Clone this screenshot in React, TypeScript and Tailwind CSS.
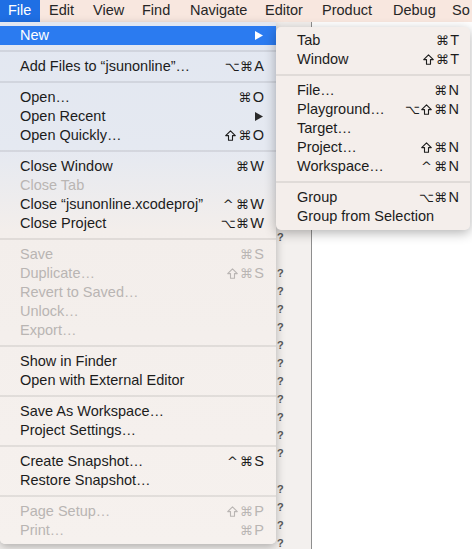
import React from "react";

type Entry =
  | "sep"
  | { label: string; keys?: string[]; disabled?: boolean; arrow?: boolean; active?: boolean };

const mainMenu: Entry[] = [
  { label: "New", arrow: true, active: true },
  "sep",
  { label: "Add Files to “jsunonline”…", keys: ["⌥", "⌘", "A"] },
  "sep",
  { label: "Open…", keys: ["⌘", "O"] },
  { label: "Open Recent", arrow: true },
  { label: "Open Quickly…", keys: ["⇧", "⌘", "O"] },
  "sep",
  { label: "Close Window", keys: ["⌘", "W"] },
  { label: "Close Tab", disabled: true },
  { label: "Close “jsunonline.xcodeproj”", keys: ["^", "⌘", "W"] },
  { label: "Close Project", keys: ["⌥", "⌘", "W"] },
  "sep",
  { label: "Save", keys: ["⌘", "S"], disabled: true },
  { label: "Duplicate…", keys: ["⇧", "⌘", "S"], disabled: true },
  { label: "Revert to Saved…", disabled: true },
  { label: "Unlock…", disabled: true },
  { label: "Export…", disabled: true },
  "sep",
  { label: "Show in Finder" },
  { label: "Open with External Editor" },
  "sep",
  { label: "Save As Workspace…" },
  { label: "Project Settings…" },
  "sep",
  { label: "Create Snapshot…", keys: ["^", "⌘", "S"] },
  { label: "Restore Snapshot…" },
  "sep",
  { label: "Page Setup…", keys: ["⇧", "⌘", "P"], disabled: true },
  { label: "Print…", keys: ["⌘", "P"], disabled: true },
];

const newMenu: Entry[] = [
  { label: "Tab", keys: ["⌘", "T"] },
  { label: "Window", keys: ["⇧", "⌘", "T"] },
  "sep",
  { label: "File…", keys: ["⌘", "N"] },
  { label: "Playground…", keys: ["⌥", "⇧", "⌘", "N"] },
  { label: "Target…" },
  { label: "Project…", keys: ["⇧", "⌘", "N"] },
  { label: "Workspace…", keys: ["^", "⌘", "N"] },
  "sep",
  { label: "Group", keys: ["⌥", "⌘", "N"] },
  { label: "Group from Selection" },
];

const bar = [
  { name: "File", w: "w-[40px] pl-[8px]" },
  { name: "Edit", w: "w-[44px] pl-[9px]" },
  { name: "View", w: "w-[49px] pl-[9px]" },
  { name: "Find", w: "w-[48px] pl-[9px]" },
  { name: "Navigate", w: "w-[75px] pl-[9px]" },
  { name: "Editor", w: "w-[57px] pl-[9px]" },
  { name: "Product", w: "w-[71px] pl-[9px]" },
  { name: "Debug", w: "w-[59px] pl-[9px]" },
  { name: "So", w: "w-[30px] pl-[9px]" },
];

function Arrow({ white }: { white?: boolean }) {
  return (
    <svg width="8" height="9" viewBox="0 0 8 9">
      <polygon points="0,0 8,4.5 0,9" fill={white ? "#ffffff" : "#2a2a2a"} />
    </svg>
  );
}

// outline shift arrow, DejaVu's is too thin
function Shift() {
  return (
    <svg width="11" height="11" viewBox="0 0 11 11" className="mx-auto">
      <polygon
        points="5.5,0.8 10.3,5.6 7.5,5.6 7.5,10.3 3.5,10.3 3.5,5.6 0.7,5.6"
        fill="none"
        stroke="currentColor"
        strokeWidth="1.1"
        strokeLinejoin="round"
      />
    </svg>
  );
}

function Keys({ keys }: { keys: string[] }) {
  const mods = keys.slice(0, -1);
  const key = keys[keys.length - 1];
  return (
    <span className="flex items-center">
      {mods.map((m, i) => (
        <span key={i} className="flex w-[14px] justify-center text-[13px] font-['DejaVu_Sans',sans-serif]">
          {m === "⇧" ? <Shift /> : m}
        </span>
      ))}
      <span className="pl-[1px]">{key}</span>
    </span>
  );
}

function MenuList({ items, padLeft, padRight }: { items: Entry[]; padLeft: string; padRight: string }) {
  return (
    <div className="flex flex-col py-[4px]">
      {items.map((it, i) =>
        it === "sep" ? (
          <div key={i} className="py-[5px]">
            <div className="h-[2px] bg-black/[0.08]" />
          </div>
        ) : (
          <div
            key={i}
            className={`flex h-[19px] items-center justify-between leading-[19px] ${padLeft} ${padRight} ${
              it.active ? "bg-[#2b7bf0] text-white" : it.disabled ? "text-[#b9b5b3]" : "text-[#1c1c1c]"
            }`}
          >
            <span>{it.label}</span>
            {it.keys && <Keys keys={it.keys} />}
            {it.arrow && (
              <span className="pr-[1px]">
                <Arrow white={it.active} />
              </span>
            )}
          </div>
        )
      )}
    </div>
  );
}

export default function App() {
  const rows = Array.from({ length: 29 }, (_, k) => k);
  return (
    <div className="relative h-[549px] w-[472px] overflow-hidden bg-white font-['Liberation_Sans',Arial,sans-serif] text-[14.5px]">
      <div className="flex h-[22px] items-center bg-[#f8e7df] text-[#262626]">
        {bar.map((b, i) => (
          <div
            key={b.name}
            className={`flex h-full shrink-0 items-center ${b.w} ${i === 0 ? "bg-[#1f6fe4] text-white" : ""}`}
          >
            {b.name}
          </div>
        ))}
      </div>

      <div className="flex h-[527px]">
        <div className="flex w-[312px] shrink-0 flex-col border-r border-[#8e8e8e] bg-[#f3f0ee] pt-[8px]">
          {rows.map((k) => (
            <div key={k} className="flex h-[18px] shrink-0 items-center pl-[277px] text-[11px] font-bold text-[#595959]">
              {k === 12 || k === 24 ? "" : "?"}
            </div>
          ))}
        </div>
        <div className="flex-1 bg-white" />
      </div>

      <div className="absolute left-0 top-[22px] w-[276px] rounded-b-[5px] bg-[linear-gradient(to_bottom,#e2e7f1_0%,#e5e9f1_24%,#f3eeeb_40%,#f6f1ee_100%)] shadow-[0_3px_10px_rgba(0,0,0,0.28)]">
        <MenuList items={mainMenu} padLeft="pl-[20px]" padRight="pr-[12px]" />
      </div>

      <div className="absolute left-[276px] top-[27px] w-[194px] rounded-[5px] bg-[#f4eeeb] shadow-[0_3px_12px_rgba(0,0,0,0.3)]">
        <MenuList items={newMenu} padLeft="pl-[21px]" padRight="pr-[11px]" />
      </div>
    </div>
  );
}
